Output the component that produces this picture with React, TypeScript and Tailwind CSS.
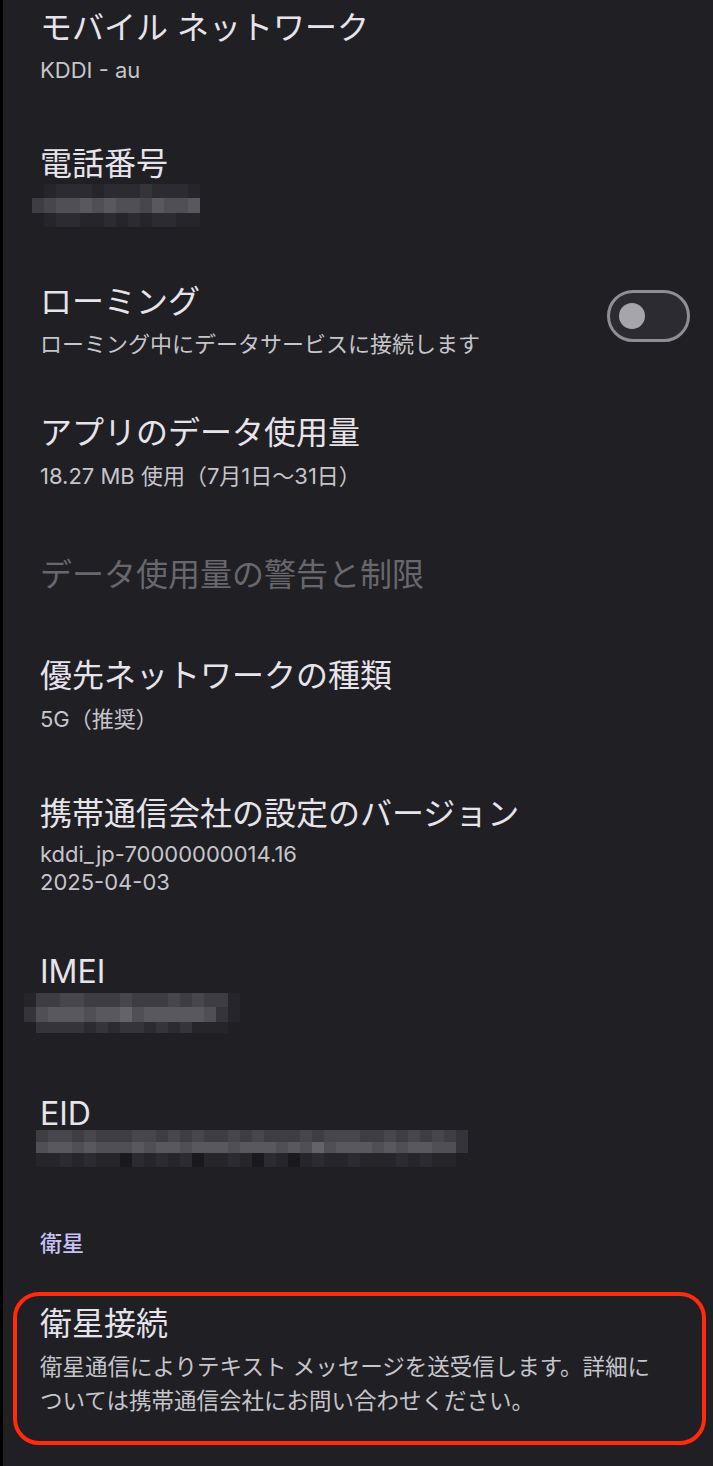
import React from 'react';

const shades = [
  'bg-[#1f1f24]',
  'bg-[#25252a]',
  'bg-[#2b2b31]',
  'bg-[#34343a]',
  'bg-[#3d3d43]',
  'bg-[#46464c]',
  'bg-[#4f4f55]',
  'bg-[#58585e]',
  'bg-[#636368]',
  'bg-[#1a1a1e]',
];

interface MosaicRow {
  h: string;
  cells: string;
}

const Mosaic: React.FC<{ rows: MosaicRow[]; className?: string }> = ({ rows, className }) => (
  <div className={`flex flex-col blur-[0.6px] ${className ?? ''}`}>
    {rows.map((row, r) => (
      <div key={r} className={`flex ${row.h}`}>
        {row.cells.split('').map((c, i) => (
          <div key={i} className={`w-[12px] h-full ${shades[Number(c)]}`} />
        ))}
      </div>
    ))}
  </div>
);

const phoneRows: MosaicRow[] = [
  { h: 'h-[14px]', cells: '01222122232221' },
  { h: 'h-[15px]', cells: '45667676657667' },
  { h: 'h-[14px]', cells: '01221121212211' },
];

const imeiRows: MosaicRow[] = [
  { h: 'h-[14px]', cells: '144554445444545441' },
  { h: 'h-[15px]', cells: '367776778677777631' },
  { h: 'h-[11px]', cells: '033332323323231110' },
];

const eidRows: MosaicRow[] = [
  { h: 'h-[12px]', cells: '455454445545454454544454555445454543' },
  { h: 'h-[11px]', cells: '677676667677677767776768677767677663' },
  { h: 'h-[14px]', cells: '112121192121291121921912112111212110' },
];

const Title: React.FC<{ children: React.ReactNode; className?: string }> = ({ children, className }) => (
  <div className={`text-[32px] leading-[40px] text-[#e6e4ea] whitespace-nowrap ${className ?? ''}`}>{children}</div>
);

const Sub: React.FC<{ children: React.ReactNode; className?: string }> = ({ children, className }) => (
  <div className={`text-[22px] leading-[30px] text-[#c6c5cb] whitespace-nowrap ${className ?? ''}`}>{children}</div>
);

const Toggle: React.FC = () => (
  <div className="w-[83px] h-[52px] rounded-full border-[3px] border-[#8f8e94] bg-[#2c2b31] flex items-center shrink-0">
    <div className="w-[26px] h-[26px] rounded-full bg-[#a6a5ab] ml-[9px]" />
  </div>
);

export default function App() {
  return (
    <div className="w-full h-[1466px] overflow-hidden bg-[#1f1f24] border-l-[3px] border-black pl-[37px] pr-[23px] font-['Inter','Noto_Sans_CJK_JP',sans-serif]">
      <div className="flex flex-col">
        {/* モバイル ネットワーク */}
        <Title className="mt-[8px]">モバイル ネットワーク</Title>
        <Sub className="mt-[7px]">KDDI - au</Sub>

        {/* 電話番号 */}
        <Title className="mt-[59px]">電話番号</Title>
        <Mosaic rows={phoneRows} className="-ml-[8px] mt-0" />

        {/* ローミング */}
        <div className="flex items-start justify-between mt-[55px]">
          <div className="flex flex-col">
            <Title>ローミング</Title>
            <Sub className="mt-[7px]">ローミング中にデータサービスに接続します</Sub>
          </div>
          <div className="mt-[8px]">
            <Toggle />
          </div>
        </div>

        {/* アプリのデータ使用量 */}
        <Title className="mt-[54px]">アプリのデータ使用量</Title>
        <Sub className="mt-[8px]">18.27 MB 使用（7月1日〜31日）</Sub>

        {/* disabled */}
        <Title className="mt-[64px] !text-[#68676d]">データ使用量の警告と制限</Title>

        {/* 優先ネットワークの種類 */}
        <Title className="mt-[61px]">優先ネットワークの種類</Title>
        <Sub className="mt-[8px]">5G（推奨）</Sub>

        {/* 携帯通信会社の設定のバージョン */}
        <Title className="mt-[60px]">携帯通信会社の設定のバージョン</Title>
        <div className="mt-[6px] text-[22px] leading-[28px] text-[#c6c5cb]">
          <div>kddi_jp-70000000014.16</div>
          <div>2025-04-03</div>
        </div>

        {/* IMEI */}
        <Title className="mt-[56px]">IMEI</Title>
        <Mosaic rows={imeiRows} className="-ml-[16px] mt-[1px]" />

        {/* EID */}
        <Title className="mt-[61px]">EID</Title>
        <Mosaic rows={eidRows} className="-ml-[4px] -mt-[4px]" />

        {/* 衛星 */}
        <div className="mt-[61px] text-[22px] leading-[30px] font-medium text-[#c7c2f4]">衛星</div>

        {/* 衛星接続 (highlighted) */}
        <div className="mt-[34px] -ml-[27px] -mr-[16px] border-[4px] border-[#ff2b0c] rounded-[26px] pl-[23px] pt-[8px] pb-[23px]">
          <Title>衛星接続</Title>
          <div className="mt-[6px] text-[22.5px] leading-[34px] text-[#c6c5cb] whitespace-nowrap">
            衛星通信によりテキスト メッセージを送受信します。詳細に
            <br />
            ついては携帯通信会社にお問い合わせください。
          </div>
        </div>
      </div>
    </div>
  );
}
